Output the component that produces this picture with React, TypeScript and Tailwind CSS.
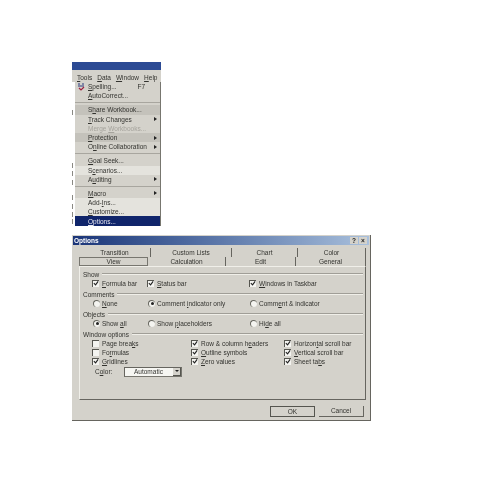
import React from 'react';

type MenuRow = { label: React.ReactNode; hint?: string; arrow?: boolean; tone?: string; sep?: boolean };

const menuRows: MenuRow[] = [
  { label: <><u>S</u>pelling...</>, hint: 'F7' },
  { label: <><u>A</u>utoCorrect...</> },
  { label: <>S<u>h</u>are Workbook...</>, sep: true, tone: 'bg-[#c4c2bb]' },
  { label: <><u>T</u>rack Changes</>, arrow: true },
  { label: <>Merge <u>W</u>orkbooks...</>, tone: 'text-[#a5a39c]' },
  { label: <><u>P</u>rotection</>, arrow: true, tone: 'bg-[#c4c2bb]' },
  { label: <>O<u>n</u>line Collaboration</>, arrow: true },
  { label: <><u>G</u>oal Seek...</>, sep: true },
  { label: <>S<u>c</u>enarios...</>, tone: 'bg-[#e4e3dd]' },
  { label: <>A<u>u</u>diting</>, arrow: true },
  { label: <><u>M</u>acro</>, arrow: true, sep: true },
  { label: <>Add-<u>I</u>ns...</>, tone: 'bg-[#e4e3dd]' },
  { label: <><u>C</u>ustomize...</>, tone: 'bg-[#e4e3dd]' },
  { label: <><u>O</u>ptions...</>, tone: 'bg-[#10256b] text-[#e8e8f0]' },
];

// bits of the worksheet's first column that show left of the dropdown
const sheetSpecks = ['mt-[28px]', 'mt-[48px]', 'mt-[3px]', 'mt-[4px]', 'mt-[10px]', 'mt-[4px]', 'mt-[3px]', 'mt-[2px]'];

const Check = ({ on = true }: { on?: boolean }) => (
  <span className="flex h-[7px] w-[7px] shrink-0 items-center justify-center border-t border-l border-[#55554f] bg-[#f4f4f0]">
    {on && (
      <svg viewBox="0 0 7 7" className="h-[7px] w-[7px]">
        <path d="M1 3l2 2 3-4" fill="none" stroke="#222" strokeWidth="1.3" />
      </svg>
    )}
  </span>
);

const Radio = ({ on = false }: { on?: boolean }) => (
  <span className="flex h-[7px] w-[7px] shrink-0 items-center justify-center rounded-full border-t border-l border-[#66665f] bg-[#f4f4f0]">
    {on && <span className="h-[3px] w-[3px] rounded-full bg-[#222]" />}
  </span>
);

const CheckOpt = ({ children, on = true }: { children: React.ReactNode; on?: boolean }) => (
  <div className="flex h-[9px] items-center gap-[3px] whitespace-nowrap">
    <Check on={on} />
    <span>{children}</span>
  </div>
);

const RadioOpt = ({ children, on = false }: { children: React.ReactNode; on?: boolean }) => (
  <div className="flex h-[9px] items-center gap-[2px] whitespace-nowrap">
    <Radio on={on} />
    <span>{children}</span>
  </div>
);

const Group = ({ title, children }: { title: string; children: React.ReactNode }) => (
  <div>
    <div className="flex h-[9px] items-center gap-[3px]">
      <span className="whitespace-nowrap">{title}</span>
      <span className="h-[2px] flex-1 border-y border-t-[#a09e97] border-b-[#f0efe9]" />
    </div>
    {children}
  </div>
);

const Tab = ({ width, children, selected }: { width: string; children: string; selected?: boolean }) => (
  <div className={`flex h-[9px] items-center justify-center border-r border-[#66655f] ${width} ${selected ? 'border border-[#77766f]' : ''}`}>
    {children}
  </div>
);

export default function App() {
  return (
    <div className="h-[495px] w-[495px] overflow-hidden bg-white pl-[72px] pt-[62px] font-['Liberation_Sans',sans-serif] text-[6.5px] leading-[9px] text-[#33332f] blur-[0.25px]">
      {/* Excel Tools menu */}
      <div className="w-[89px]">
        <div className="h-[8px] bg-[#2c4a94]" />
        <div className="flex h-[12px] items-center gap-[5px] bg-[#d4d2cb] pl-[5px] pt-[2px]">
          <span><u>T</u>ools</span>
          <span><u>D</u>ata</span>
          <span><u>W</u>indow</span>
          <span><u>H</u>elp</span>
        </div>
        <div className="flex">
          <div className="flex w-[3px] flex-col">
            {sheetSpecks.map((mt, i) => (
              <span key={i} className={`h-[5px] w-[2px] border-l border-[#8a8983] ${mt}`} />
            ))}
          </div>
          <div className="relative flex-1 border-r border-[#77766f] bg-[#d4d2cb]">
            <svg viewBox="0 0 8 8" className="absolute left-[2px] top-[1px] h-[8px] w-[8px]">
              <path d="M1 1h2M5 1h2M1 3h6" stroke="#2a3a80" strokeWidth="1" />
              <path d="M2 5l2 2 3-3" fill="none" stroke="#a02040" strokeWidth="1.2" />
            </svg>
            {menuRows.map((row, i) => (
              <React.Fragment key={i}>
                {row.sep && (
                  <div className="flex h-[5px] items-center">
                    <div className="h-px w-full bg-[#a8a69f]" />
                  </div>
                )}
                <div className={`flex h-[9.2px] items-center pl-[13px] pr-[3px] ${row.tone ?? ''}`}>
                  <span className="flex-1 whitespace-nowrap">{row.label}</span>
                  {row.hint && <span className="mr-[12px]">{row.hint}</span>}
                  {row.arrow && <span className="h-0 w-0 border-y-[2px] border-l-[3px] border-y-transparent border-l-[#222]" />}
                </div>
              </React.Fragment>
            ))}
          </div>
        </div>
      </div>

      {/* Options dialog */}
      <div className="mt-[9px] flex h-[186px] w-[299px] flex-col border-r border-b border-[#66655f] bg-[#d4d2cb] p-px">
        <div className="flex h-[9px] items-center justify-between bg-gradient-to-r from-[#1b3578] to-[#a9c0dc] pl-[1px] pr-[2px] font-bold text-white">
          <span>Options</span>
          <div className="flex gap-px text-[#222]">
            <span className="flex h-[7px] w-[8px] items-center justify-center bg-[#d4d2cb]">?</span>
            <span className="flex h-[7px] w-[8px] items-center justify-center bg-[#d4d2cb]">×</span>
          </div>
        </div>

        <div className="ml-[6px] mt-[3px] w-[287px]">
          <div className="flex">
            <Tab width="w-[72px]">Transition</Tab>
            <Tab width="w-[81px]">Custom Lists</Tab>
            <Tab width="w-[66px]">Chart</Tab>
            <Tab width="w-[68px]">Color</Tab>
          </div>
          <div className="flex">
            <Tab width="w-[69px]" selected>View</Tab>
            <Tab width="w-[78px]">Calculation</Tab>
            <Tab width="w-[70px]">Edit</Tab>
            <Tab width="w-[70px]">General</Tab>
          </div>
          <div className="flex h-[134px] flex-col gap-[2px] border border-t-[#f0efe9] border-l-[#f0efe9] border-r-[#66655f] border-b-[#66655f] pl-[3px] pr-[2px] pt-[3px]">
            <Group title="Show">
              <div className="grid grid-cols-[55px_102px_1fr] pl-[9px]">
                <CheckOpt><u>F</u>ormula bar</CheckOpt>
                <CheckOpt><u>S</u>tatus bar</CheckOpt>
                <CheckOpt><u>W</u>indows in Taskbar</CheckOpt>
              </div>
            </Group>
            <Group title="Comments">
              <div className="grid grid-cols-[55px_102px_1fr] pl-[10px]">
                <RadioOpt><u>N</u>one</RadioOpt>
                <RadioOpt on>Comment <u>i</u>ndicator only</RadioOpt>
                <RadioOpt>Comm<u>e</u>nt &amp; indicator</RadioOpt>
              </div>
            </Group>
            <Group title="Objects">
              <div className="grid grid-cols-[55px_102px_1fr] pl-[10px]">
                <RadioOpt on>Show <u>a</u>ll</RadioOpt>
                <RadioOpt>Show <u>p</u>laceholders</RadioOpt>
                <RadioOpt>Hi<u>d</u>e all</RadioOpt>
              </div>
            </Group>
            <Group title="Window options">
              <div className="grid grid-cols-[99px_93px_1fr] pl-[9px]">
                <CheckOpt on={false}>Page brea<u>k</u>s</CheckOpt>
                <CheckOpt>Row &amp; column h<u>e</u>aders</CheckOpt>
                <CheckOpt>Horizon<u>t</u>al scroll bar</CheckOpt>
                <CheckOpt on={false}>Fo<u>r</u>mulas</CheckOpt>
                <CheckOpt><u>O</u>utline symbols</CheckOpt>
                <CheckOpt><u>V</u>ertical scroll bar</CheckOpt>
                <CheckOpt><u>G</u>ridlines</CheckOpt>
                <CheckOpt><u>Z</u>ero values</CheckOpt>
                <CheckOpt>Sheet ta<u>b</u>s</CheckOpt>
              </div>
              <div className="mt-[1px] flex h-[10px] items-center pl-[12px]">
                <span className="w-[29px]">C<u>o</u>lor:</span>
                <div className="flex h-[10px] w-[58px] items-center justify-between border border-t-[#66655f] border-l-[#66655f] border-r-[#77766f] border-b-[#77766f] bg-[#f6f6f2] pl-[9px]">
                  <span>Automatic</span>
                  <span className="flex h-[8px] w-[8px] items-center justify-center border-r border-b border-[#55554f] bg-[#d4d2cb]">
                    <span className="h-0 w-0 border-x-[2px] border-t-[2px] border-x-transparent border-t-[#222]" />
                  </span>
                </div>
              </div>
            </Group>
          </div>
        </div>

        <div className="mr-[5px] mt-[6px] flex justify-end gap-[4px]">
          <div className="flex h-[11px] w-[45px] items-center justify-center border border-[#55554f] bg-[#d4d2cb]">OK</div>
          <div className="flex h-[11px] w-[45px] items-center justify-center border-r border-b border-r-[#66655f] border-b-[#66655f] bg-[#d4d2cb]">Cancel</div>
        </div>
      </div>
    </div>
  );
}
